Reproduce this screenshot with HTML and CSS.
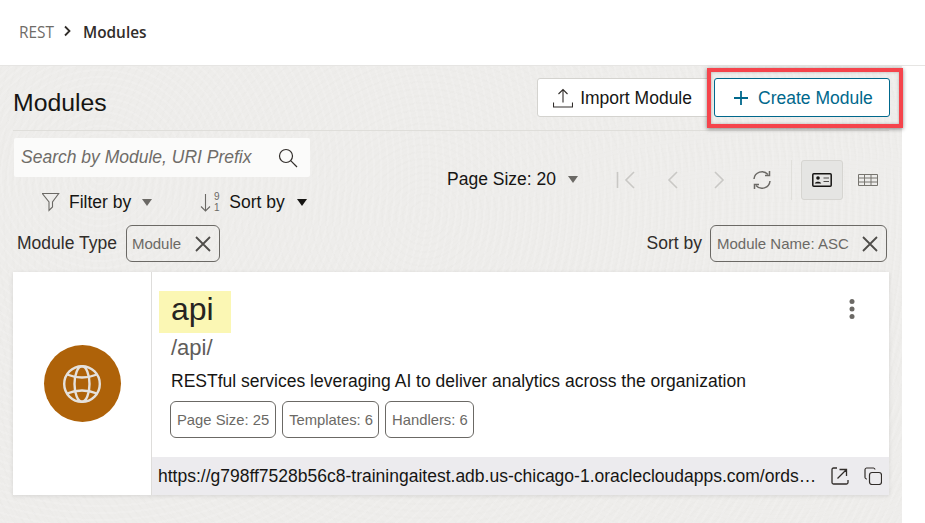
FILE: index.html
```html
<!DOCTYPE html>
<html lang="en">
<head>
<meta charset="utf-8">
<title>Modules</title>
<link rel="stylesheet" href="styles.css">
</head>
<body>
<header class="crumbs">
  <span class="crumb-root">REST</span>
  <svg class="crumb-sep" width="10" height="12" viewBox="0 0 10 12"><path d="M3 1.500 7.500 6 3 10.500" fill="none" stroke="#312d2a" stroke-width="1.800"/></svg>
  <span class="crumb-current">Modules</span>
</header>
<main class="page">
  <section class="title-row">
    <h1 class="title">Modules</h1>
    <div class="actions">
      <button class="btn">
        <svg width="20" height="20" viewBox="0 0 20 20" fill="none" stroke="#312d2a" stroke-width="1.100"><path d="M10 14.500V1.500M5.500 6 10 1.500 14.500 6M.5 14.500v4.500h19v-4.500"/></svg>
        <span class="btn-label">Import Module</span>
      </button>
      <button class="btn btn-primary">
        <svg width="16" height="16" viewBox="0 0 16 16" fill="none" stroke="#00688c" stroke-width="1.800"><path d="M8 1v14M1 8h14"/></svg>
        <span class="btn-label">Create Module</span>
      </button>
    </div>
  </section>
  <section class="toolbar">
    <div class="tools-left">
      <div class="search">
        <span class="search-text">Search by Module, URI Prefix</span>
        <svg width="20" height="20" viewBox="0 0 20 20" fill="none" stroke="#312d2a" stroke-width="1.200"><circle cx="8" cy="8" r="6.500"/><path d="m12.700 12.700 6.300 6.300"/></svg>
      </div>
      <div class="menus">
        <div class="menu menu-filter">
          <svg width="18" height="20" viewBox="0 0 18 20" fill="none" stroke="#6b6965" stroke-width="1.100"><path d="M.8 1.500h16.400L11 10v5l-3.500 3.500V10z" transform="translate(-.5 0)"/></svg>
          <span>Filter by</span>
          <i class="caret caret-grey"></i>
        </div>
        <div class="menu menu-sort">
          <svg width="20" height="22" viewBox="0 0 20 22" fill="none" stroke="#6b6965" stroke-width="1.100"><path d="M5.500 3v17M1 15.500 5.500 20l4.500-4.500"/><text x="14" y="9" class="sort-digit">9</text><text x="14" y="20" class="sort-digit">1</text></svg>
          <span>Sort by</span>
          <i class="caret"></i>
        </div>
      </div>
    </div>
    <div class="pager">
      <div class="page-size"><span>Page Size: 20</span><i class="caret caret-grey"></i></div>
      <svg class="pg pg-first" width="20" height="18" viewBox="0 0 20 18" fill="none" stroke="#c9c8c5" stroke-width="1.600"><path d="M1.500 1v16M18 1 10 9l8 8"/></svg>
      <svg class="pg pg-prev" width="12" height="18" viewBox="0 0 12 18" fill="none" stroke="#c9c8c5" stroke-width="1.600"><path d="M10 1 2 9l8 8"/></svg>
      <svg class="pg pg-next" width="12" height="18" viewBox="0 0 12 18" fill="none" stroke="#c9c8c5" stroke-width="1.600"><path d="m2 1 8 8-8 8"/></svg>
      <svg class="pg pg-refresh" width="20" height="20" viewBox="0 0 20 20" fill="none" stroke="#6b6965" stroke-width="1.500"><path d="M2 9a8 8 0 0 1 14-4.500M18 11a8 8 0 0 1-14 4.500"/><path d="M17.500 1v4.500H13M2.500 19v-4.500H7"/></svg>
      <span class="pg-divider"></span>
      <div class="view-btn view-on">
        <svg width="20" height="14" viewBox="0 0 20 14" fill="none" stroke="#161513" stroke-width="1.500"><rect x=".8" y=".8" width="18.400" height="12.400" rx="1"/><circle cx="6" cy="5" r="1.800" fill="#161513" stroke="none"/><path d="M2.800 10.500c.3-2.500 6-2.500 6.400 0z" fill="#161513" stroke="none"/><path d="M11.500 5h5.500M11.500 8.500h5.500" stroke="#4f4d4a" stroke-width="1.100"/></svg>
      </div>
      <div class="view-btn">
        <svg width="20" height="12" viewBox="0 0 20 12" fill="none" stroke="#77756f" stroke-width="1"><path d="M.5.500h19v11H.5zM.5 4h19M.5 8h19M6.500.5v11M13 .5v11"/></svg>
      </div>
    </div>
  </section>
  <section class="filters">
    <div class="filter-group">
      <span class="filter-label">Module Type</span>
      <div class="chip chip-close chip-type"><span>Module</span><svg width="16" height="16" viewBox="0 0 16 16" fill="none" stroke="#4f4d4a" stroke-width="1.800"><path d="m1 1 14 14M15 1 1 15"/></svg></div>
    </div>
    <div class="filter-group">
      <span class="filter-label filter-label-sort">Sort by</span>
      <div class="chip chip-close chip-sort"><span>Module Name: ASC</span><svg width="16" height="16" viewBox="0 0 16 16" fill="none" stroke="#4f4d4a" stroke-width="1.800"><path d="m1 1 14 14M15 1 1 15"/></svg></div>
    </div>
  </section>
  <article class="card">
    <div class="card-side">
      <div class="avatar">
        <svg width="40" height="40" viewBox="0 0 40 40" fill="none" stroke="#e5e1dc" stroke-width="2.400"><circle cx="20" cy="20" r="17.800"/><ellipse cx="20" cy="20" rx="7.500" ry="17.800"/><path d="M5 10.500Q20 16.500 35 10.500M5 29.500Q20 23.500 35 29.500"/></svg>
      </div>
    </div>
    <div class="card-main">
      <div class="card-body">
        <div class="card-head">
          <h2 class="card-name">api</h2>
          <svg class="kebab" width="6" height="20" viewBox="0 0 6 20" fill="#6b6965"><circle cx="3" cy="2.500" r="2.500"/><circle cx="3" cy="10" r="2.500"/><circle cx="3" cy="17.500" r="2.500"/></svg>
        </div>
        <div class="card-uri">/api/</div>
        <p class="card-desc">RESTful services leveraging AI to deliver analytics across the organization</p>
        <div class="stats">
          <span class="chip chip-stat">Page Size: 25</span>
          <span class="chip chip-stat">Templates: 6</span>
          <span class="chip chip-stat">Handlers: 6</span>
        </div>
      </div>
      <div class="card-foot">
        <span class="url">https://g798ff7528b56c8-trainingaitest.adb.us-chicago-1.oraclecloudapps.com/ords/api/</span>
        <svg class="foot-link" width="18" height="18" viewBox="0 0 18 18" fill="none" stroke="#312d2a" stroke-width="1.300"><path d="M6 1H2.500A1.500 1.500 0 0 0 1 2.500v13A1.500 1.500 0 0 0 2.500 17h13a1.500 1.500 0 0 0 1.500-1.500V13M6.500 11.500 15 3M8.500 2.500H15.500V9"/></svg>
        <svg width="18" height="18" viewBox="0 0 18 18" fill="none" stroke="#312d2a" stroke-width="1.200"><rect x="5.500" y="5.500" width="12" height="12" rx="2.500"/><path d="M3 12H2.500A1.800 1.800 0 0 1 1 10.500V2.500A1.800 1.800 0 0 1 2.500 1h7A1.800 1.800 0 0 1 11 2.500"/></svg>
      </div>
    </div>
  </article>
  <div class="callout"></div>
</main>
</body>
</html>
```
FILE: styles.css
```css
* { box-sizing: border-box; }
html, body { margin: 0; padding: 0; height: 100%; }
body {
  width: 925px;
  height: 523px;
  overflow: hidden;
  background: #fff;
  font-family: "Liberation Sans", Arial, sans-serif;
  color: #161513;
}
.crumbs {
  height: 66px;
  padding: 0 0 0 19px;
  display: flex;
  align-items: center;
  font-family: "Open Sans", sans-serif;
  font-size: 15.400px;
  border-bottom: 1px solid #e6e5e3;
}
.crumb-root { color: #6f6c68; }
.crumb-sep { margin: -3px 11px 0 8px; }
.crumb-current { color: #312d2a; font-weight: 600; }

.page {
  position: relative;
  width: 902px;
  height: 457px;
  padding: 0 13px;
  background-color: #eeedeb;
  background-image:
    repeating-radial-gradient(circle at 100px 110px, rgba(255,255,255,.12) 0 2px, transparent 2px 7px),
    repeating-radial-gradient(circle at 425px 150px, rgba(225,224,220,.12) 0 2px, transparent 2px 7px),
    repeating-radial-gradient(ellipse 700px 420px at 780px 330px, rgba(228,227,223,.1) 0 2px, transparent 2px 7px);
}
.title-row {
  height: 65px;
  padding-top: 12px;
  display: flex;
  justify-content: space-between;
  align-items: flex-start;
  border-bottom: 1px solid #dfdeda;
}
.title {
  margin: 10px 0 0;
  font-size: 24.800px;
  line-height: 30px;
  font-weight: 400;
}
.actions { display: flex; gap: 4px; margin-right: -1px; }
.btn {
  height: 39px;
  display: flex;
  align-items: center;
  gap: 7px;
  padding: 0 17px 0 15px;
  font: 17.500px "Liberation Sans", Arial, sans-serif;
  color: #161513;
  background: #fff;
  border: 1px solid #d4d3cf;
  border-radius: 3px;
}
.btn-label { padding-top: 2px; }
.btn-primary {
  width: 176px;
  padding: 0 0 0 18px;
  gap: 9px;
  color: #00688c;
  border-color: #00688c;
}
.toolbar {
  display: flex;
  height: 94px;
  padding-top: 7px;
}
.tools-left { width: 434px; flex: none; }
.search {
  width: 296px;
  height: 39px;
  margin-left: 1px;
  padding: 0 12px 0 7px;
  display: flex;
  align-items: center;
  justify-content: space-between;
  background: #fbfbfa;
  border-radius: 2px;
}
.search-text { font-size: 17.500px; font-style: italic; color: #6f6c68; }
.menus { display: flex; margin-top: 7px; height: 36px; align-items: center; font-size: 17.500px; }
.menu { display: flex; align-items: center; }
.menu-filter { margin-left: 29px; gap: 9px; }
.menu-filter .caret { margin-left: 2px; }
.menu-sort { margin-left: 48px; gap: 9px; }
.menu-sort .caret { margin-left: 3px; }
.sort-digit { font-size: 10px; fill: #6b6965; stroke: none; font-family: "Liberation Sans", sans-serif; }
.caret {
  display: inline-block;
  width: 0;
  height: 0;
  margin-left: 12px;
  border-left: 5.500px solid transparent;
  border-right: 5.500px solid transparent;
  border-top: 7px solid #161513;
}
.caret-grey { border-top-color: #6b6965; }
.pager {
  display: flex;
  align-items: center;
  height: 84px;
  flex: 1;
  font-size: 17.500px;
}
.page-size { display: flex; align-items: center; width: 169px; margin-top: -2px; }
.pg { flex: none; }
.pg-prev { margin-left: 31px; }
.pg-next { margin-left: 34px; }
.pg-refresh { margin-left: 27px; }
.pg-divider { width: 1px; height: 40px; margin-left: 19px; background: #e0dfdb; }
.view-btn {
  width: 42px;
  height: 40px;
  margin-left: 9px;
  display: flex;
  flex: none;
  align-items: center;
  justify-content: center;
  border-radius: 3px;
  border: 1px solid transparent;
}
.view-on { background: #e5e5e3; border-color: #d6d5d1; }
.view-on + .view-btn { margin-left: 4px; }
.filters {
  display: flex;
  justify-content: space-between;
  height: 47px;
  padding: 0 2px 0 4px;
}
.filter-group { display: flex; align-items: flex-start; }
.filter-label { font-size: 17.500px; line-height: 36px; margin-right: 9px; color: #312d2a; }
.filter-label-sort { margin-right: 8px; }
.chip {
  display: inline-flex;
  align-items: center;
  height: 37px;
  border: 1px solid #6b6965;
  border-radius: 6px;
  font-size: 15px;
  color: #6b6965;
}
.chip-close { justify-content: space-between; padding: 0 8px 0 5px; }
.chip-type { width: 94px; }
.chip-sort { width: 177px; padding-left: 6px; }
.card {
  display: flex;
  height: 223px;
  background: #fff;
  box-shadow: 0 1px 4px rgba(0,0,0,.1);
}
.card-side {
  width: 139px;
  flex: none;
  display: flex;
  align-items: center;
  justify-content: center;
  border-right: 1px solid #dedddb;
}
.avatar {
  width: 77px;
  height: 77px;
  border-radius: 50%;
  background: #ae6209;
  display: flex;
  align-items: center;
  justify-content: center;
}
.card-main { flex: 1; display: flex; flex-direction: column; min-width: 0; }
.card-body { flex: 1; padding: 19px 0 0 7px; }
.card-head { display: flex; justify-content: space-between; align-items: flex-start; }
.card-name {
  width: 72px;
  height: 42px;
  margin: 0;
  padding-left: 12px;
  background: #fbf7b4;
  font-size: 32px;
  line-height: 36px;
  font-weight: 400;
  color: #262421;
}
.kebab { margin: 8px 34px 0 0; }
.card-uri { margin: 2px 0 0 12px; font-size: 22px; line-height: 26px; color: #5f5d5a; }
.card-desc { margin: 10px 0 0 12px; font-size: 17.500px; line-height: 20px; }
.stats { display: flex; gap: 6px; margin: 10px 0 0 11px; }
.chip-stat { padding: 0 5px 0 6px; font-size: 14.800px; }
.chip-stat:first-child { padding-right: 6px; }
.card-foot {
  height: 38px;
  display: flex;
  align-items: center;
  gap: 15px;
  padding: 0 7px 0 6px;
  background: #ecebee;
}
.url { flex: 1; min-width: 0; margin-right: -3px; font-size: 17.500px; white-space: nowrap; overflow: hidden; text-overflow: ellipsis; }
.foot-link { margin-left: 1px; }
.callout {
  position: absolute;
  left: 707px;
  top: 2px;
  width: 196px;
  height: 60px;
  border: 4px solid #f5444c;
  box-shadow: 0 1px 4px rgba(0,0,0,.45), inset 0 0 3px rgba(0,0,0,.25);
}
```
